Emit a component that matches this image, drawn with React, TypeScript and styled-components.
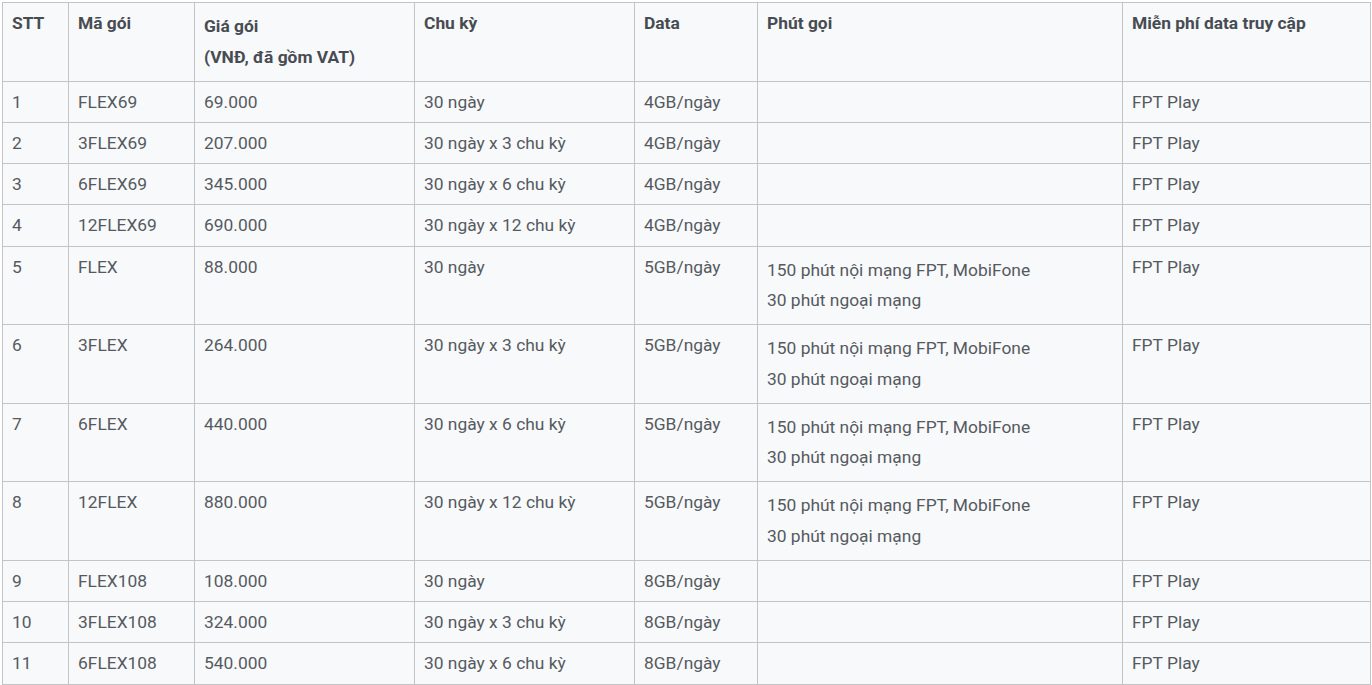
import React from "react";
import styled, { createGlobalStyle } from "styled-components";

const Global = createGlobalStyle`
  html, body { margin: 0; padding: 0; background: #ffffff; }
  body { font-family: Roboto, "Noto Sans", Arial, sans-serif; }
`;

const Wrap = styled.div`
  padding: 2px;
`;

const Table = styled.table`
  width: 1368px;
  border-collapse: collapse;
  table-layout: fixed;
  background: #f8f9fb;
  font-size: 17.4px;
  color: #555a60;
`;

const Th = styled.th`
  border: 1px solid #c4c4c4;
  padding: 8px 9px;
  text-align: left;
  vertical-align: top;
  font-weight: 700;
  color: #474c52;
  line-height: 24.3px;
`;

const Td = styled.td`
  border: 1px solid #c4c4c4;
  padding: 8px 9px;
  text-align: left;
  vertical-align: top;
  font-weight: 400;
  line-height: 24.3px;
`;

const Line = styled.p`
  margin: 0;
  line-height: 30.75px;
`;

const widths = [66, 126, 220, 220, 123, 365, 248];

type Row = {
  stt: number;
  code: string;
  price: string;
  cycle: string;
  data: string;
  calls: boolean;
};

const rows: Row[] = [
  { stt: 1, code: "FLEX69", price: "69.000", cycle: "30 ngày", data: "4GB/ngày", calls: false },
  { stt: 2, code: "3FLEX69", price: "207.000", cycle: "30 ngày x 3 chu kỳ", data: "4GB/ngày", calls: false },
  { stt: 3, code: "6FLEX69", price: "345.000", cycle: "30 ngày x 6 chu kỳ", data: "4GB/ngày", calls: false },
  { stt: 4, code: "12FLEX69", price: "690.000", cycle: "30 ngày x 12 chu kỳ", data: "4GB/ngày", calls: false },
  { stt: 5, code: "FLEX", price: "88.000", cycle: "30 ngày", data: "5GB/ngày", calls: true },
  { stt: 6, code: "3FLEX", price: "264.000", cycle: "30 ngày x 3 chu kỳ", data: "5GB/ngày", calls: true },
  { stt: 7, code: "6FLEX", price: "440.000", cycle: "30 ngày x 6 chu kỳ", data: "5GB/ngày", calls: true },
  { stt: 8, code: "12FLEX", price: "880.000", cycle: "30 ngày x 12 chu kỳ", data: "5GB/ngày", calls: true },
  { stt: 9, code: "FLEX108", price: "108.000", cycle: "30 ngày", data: "8GB/ngày", calls: false },
  { stt: 10, code: "3FLEX108", price: "324.000", cycle: "30 ngày x 3 chu kỳ", data: "8GB/ngày", calls: false },
  { stt: 11, code: "6FLEX108", price: "540.000", cycle: "30 ngày x 6 chu kỳ", data: "8GB/ngày", calls: false },
];

export default function App() {
  return (
    <Wrap>
      <Global />
      <Table>
        <colgroup>
          {widths.map((w, i) => (
            <col key={i} style={{ width: w }} />
          ))}
        </colgroup>
        <thead>
          <tr>
            <Th>STT</Th>
            <Th>Mã gói</Th>
            <Th>
              <Line>Giá gói</Line>
              <Line>(VNĐ, đã gồm VAT)</Line>
            </Th>
            <Th>Chu kỳ</Th>
            <Th>Data</Th>
            <Th>Phút gọi</Th>
            <Th>Miễn phí data truy cập</Th>
          </tr>
        </thead>
        <tbody>
          {rows.map((r) => (
            <tr key={r.stt}>
              <Td>{r.stt}</Td>
              <Td>{r.code}</Td>
              <Td>{r.price}</Td>
              <Td>{r.cycle}</Td>
              <Td>{r.data}</Td>
              <Td>
                {r.calls && (
                  <>
                    <Line>150 phút nội mạng FPT, MobiFone</Line>
                    <Line>30 phút ngoại mạng</Line>
                  </>
                )}
              </Td>
              <Td>FPT Play</Td>
            </tr>
          ))}
        </tbody>
      </Table>
    </Wrap>
  );
}
